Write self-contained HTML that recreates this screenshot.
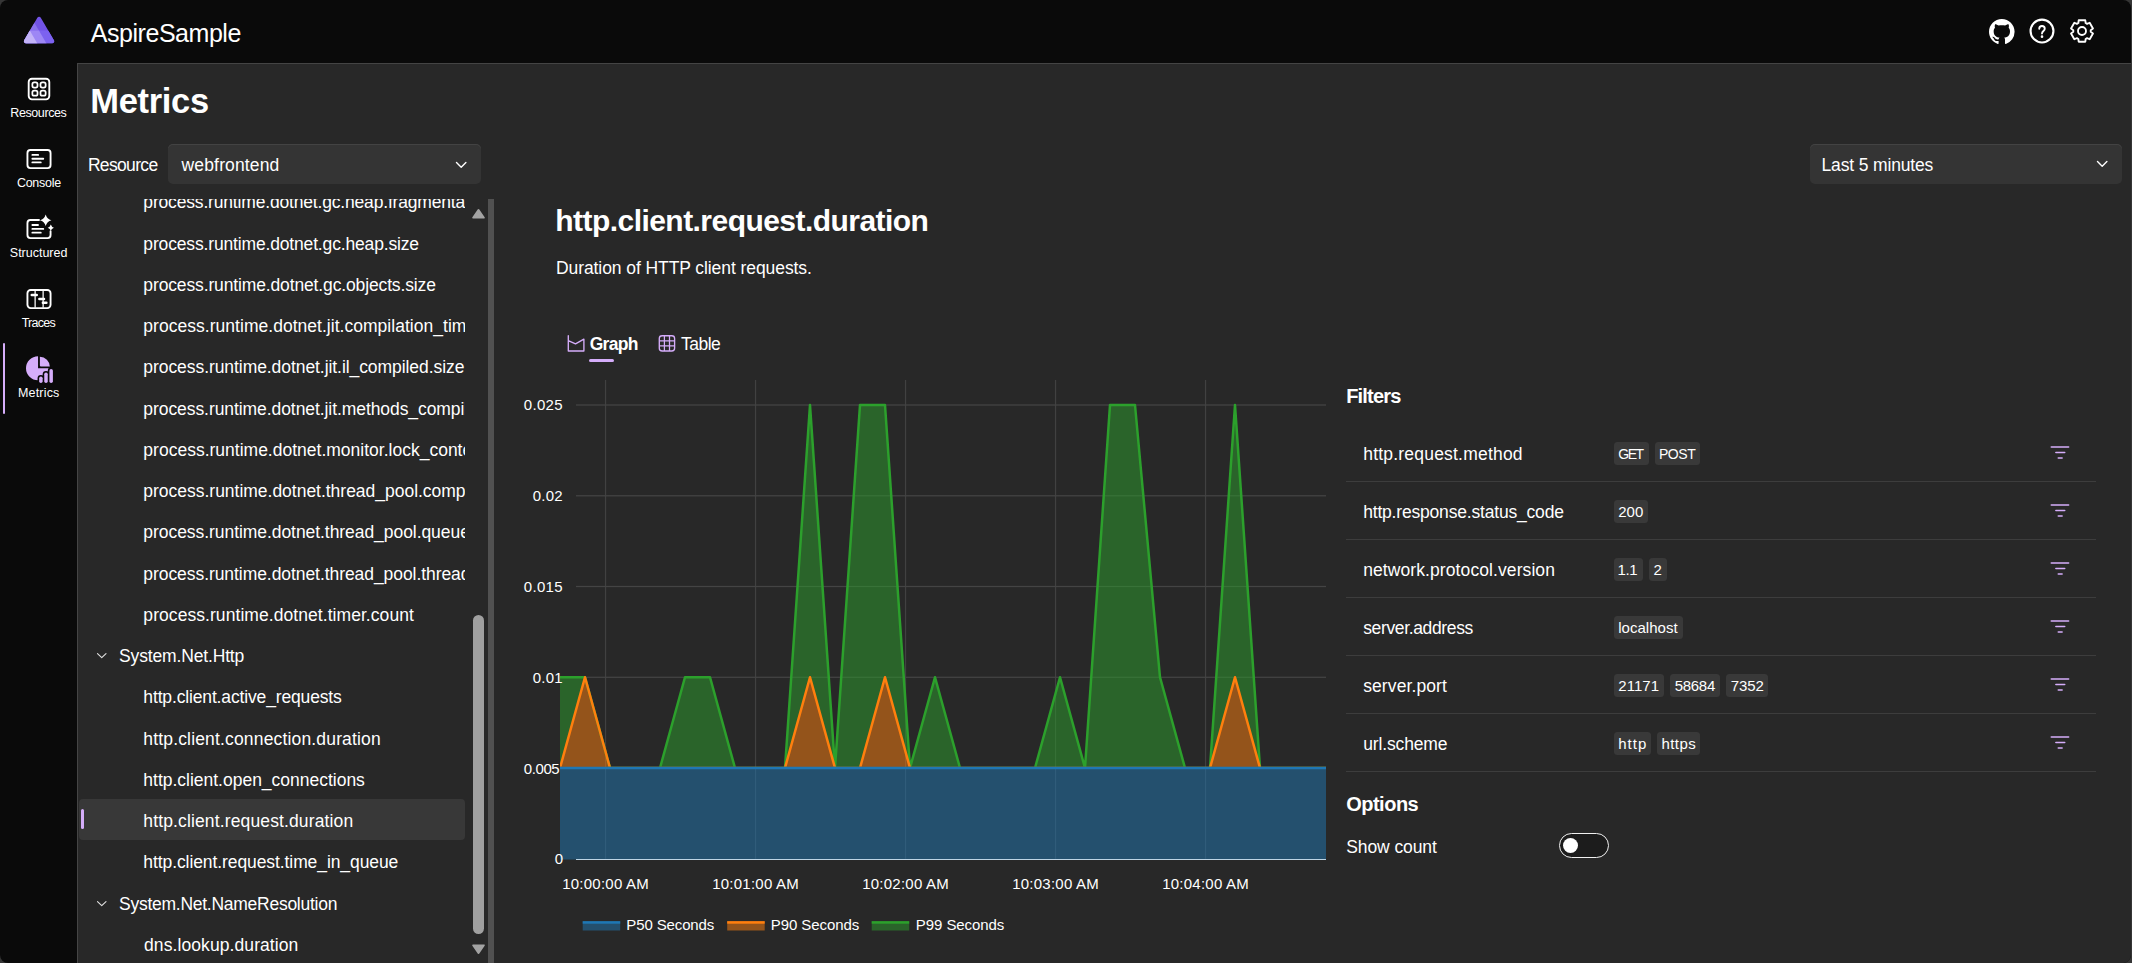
<!DOCTYPE html>
<html lang="en"><head><meta charset="utf-8"><title>AspireSample - Metrics</title>
<style>
*{box-sizing:border-box}
html,body{margin:0;padding:0}
body{width:2132px;height:963px;overflow:hidden;background:#363636;font-family:"Liberation Sans", sans-serif;color:#fff;position:relative}
#app{position:absolute;left:0;top:0;width:2131px;height:963px;background:#0a0a0a;border-radius:8px;overflow:hidden}
h1,h2,h3,h4,p,label{margin:0;font-weight:400}
.t{position:absolute;white-space:pre;display:block;color:#fff}
.i{position:absolute;display:block;overflow:visible}
header{position:absolute;left:0;top:0;width:2132px;height:63px}
nav{position:absolute;left:0;top:64px;width:77px;height:899px}
main{position:absolute;left:77px;top:63px;width:2055px;height:900px;background:#282828;border-left:1px solid #454545;border-top:1px solid #444}
.sel{position:absolute;height:40px;top:144px;background:#343434;border-radius:5px;box-shadow:inset 0 1px 0 #434343}
#tree{position:absolute;left:78.5px;top:199px;width:386.5px;height:764px;overflow:hidden}
ul,li,figure{margin:0;padding:0;list-style:none}
#tree .selrow{position:absolute;left:0;top:600px;width:386.5px;height:40.8px;background:#383838;border-radius:4px}
.chip{position:absolute;display:block;height:23.6px;background:#393939;border-radius:3.5px}
.selmark{position:absolute;width:3.3px;height:20px;border-radius:1.65px;background:#d5adfa}
.thumb{position:absolute;width:11px;height:319.2px;border-radius:5.5px;background:#a0a0a0}
.splitter{position:absolute;width:6px;height:764px;background:#515151}
.tabline{position:absolute;width:25px;height:3.1px;border-radius:1.6px;background:#d5adfa}
.switch{position:absolute;width:50.5px;height:25.2px;border:1.3px solid #f0f0f0;border-radius:13px;background:#1c1c1c}
.knob{position:absolute;left:3.3px;top:3.7px;width:15px;height:15px;border-radius:50%;background:#fff}
.sep{position:absolute;left:1346px;width:750px;height:1px;background:#3d3d3d}
</style></head>
<body>
<div id="app">
<header>
<svg class="i" style="left:22px;top:14px" width="34" height="32" viewBox="22 14 34 32"><defs><clipPath id="lg"><path d="M37.34 17.79A2.0 2.0 0 0 1 40.80 17.79L53.93 40.19A2.0 2.0 0 0 1 52.21 43.20L25.93 43.20A2.0 2.0 0 0 1 24.21 40.19Z"/></clipPath></defs><g clip-path="url(#lg)"><rect x="22" y="14" width="34" height="32" fill="#7253e6"/><polygon points="22,30.6 56,30.6 56,46 22,46" fill="#7c62f0"/><polygon points="34.5,22.9 22,22.9 22,14 30,14" fill="#8a71ee"/><polygon points="34.5,22.9 22,22.9 22,30.6 38.95,30.6" fill="#8a71ee"/><polygon points="38.95,30.6 47.9,46 22,46 22,30.6" fill="#9d87f5"/><polygon points="29.8,30.6 38.75,46 22,46 22,30.6" fill="#c3b3f8"/></g></svg>
<h1 class="t" style="left:90.85px;top:17px;font-size:25px;line-height:32px;letter-spacing:-0.467px;">AspireSample</h1>
<svg class="i" style="left:1989.4px;top:18.500px" width="25.6" height="25.6" viewBox="0 0 16 16"><path fill="#fff" d="M8 0C3.58 0 0 3.58 0 8c0 3.54 2.29 6.53 5.47 7.59.4.07.55-.17.55-.38 0-.19-.01-.82-.01-1.49-2.01.37-2.53-.49-2.69-.94-.09-.23-.48-.94-.82-1.13-.28-.15-.68-.52-.01-.53.63-.01 1.08.58 1.23.82.72 1.21 1.87.87 2.33.66.07-.52.28-.87.51-1.07-1.78-.2-3.64-.89-3.64-3.95 0-.87.31-1.59.82-2.15-.08-.2-.36-1.02.08-2.12 0 0 .67-.21 2.2.82.64-.18 1.32-.27 2-.27.68 0 1.36.09 2 .27 1.53-1.04 2.2-.82 2.2-.82.44 1.1.16 1.92.08 2.12.51.56.82 1.27.82 2.15 0 3.07-1.87 3.75-3.65 3.95.29.25.54.73.54 1.48 0 1.07-.01 1.93-.01 2.2 0 .21.15.46.55.38A8.013 8.013 0 0016 8c0-4.42-3.58-8-8-8z"/></svg>
<svg class="i" style="left:2027px;top:16.4px" width="30" height="30" viewBox="0 0 24 24" ><circle cx="12" cy="12" r="9.15" fill="none" stroke="#fff" stroke-width="1.7"/><path d="M9.8 10.200a2.200 2.200 0 0 1 4.400 0c0 1.700-2.200 1.900-2.200 3.800" fill="none" stroke="#fff" stroke-width="1.5" stroke-linecap="round"/><circle cx="12" cy="16.500" r="1.050" fill="#fff"/></svg>
<svg class="i" style="left:2067px;top:16.4px" width="30" height="30" viewBox="0 0 24 24" ><path d="M9.08 5.64 L9.34 3.40 L14.66 3.40 L14.92 5.64 L16.05 6.29 L18.12 5.40 L20.78 10.00 L18.97 11.35 L18.97 12.65 L20.78 14.00 L18.12 18.60 L16.05 17.71 L14.92 18.36 L14.66 20.60 L9.34 20.60 L9.08 18.36 L7.95 17.71 L5.88 18.60 L3.22 14.00 L5.03 12.65 L5.03 11.35 L3.22 10.00 L5.88 5.40 L7.95 6.29Z" fill="none" stroke="#fff" stroke-width="1.5" stroke-linejoin="round"/><circle cx="12" cy="12" r="3.2" fill="none" stroke="#fff" stroke-width="1.5"/></svg>
</header>
<nav>
<a class="navitem"><svg class="i" style="left:24px;top:10px" width="30" height="30" viewBox="0 0 24 24" ><rect x="3.75" y="3.75" width="16.5" height="16.5" rx="2.6" fill="none" stroke="#fff" stroke-width="1.5"/><rect x="6.7" y="6.7" width="4.1" height="4.1" rx="1.4" fill="none" stroke="#fff" stroke-width="1.4"/><rect x="6.7" y="13.2" width="4.1" height="4.1" rx="1.4" fill="none" stroke="#fff" stroke-width="1.4"/><rect x="13.2" y="6.7" width="4.1" height="4.1" rx="1.4" fill="none" stroke="#fff" stroke-width="1.4"/><rect x="13.2" y="13.2" width="4.1" height="4.1" rx="1.4" fill="none" stroke="#fff" stroke-width="1.4"/></svg><span class="t" style="left:10.35px;top:40px;font-size:12.5px;line-height:18px;letter-spacing:-0.419px;">Resources</span></a>
<a class="navitem"><svg class="i" style="left:24px;top:80px" width="30" height="30" viewBox="0 0 24 24" ><rect x="2.75" y="4.75" width="18.5" height="14.5" rx="2.4" fill="none" stroke="#fff" stroke-width="1.5"/><path d="M6.7 8.7h4.6M6.7 11.75h8.7M6.7 14.7h6.7" stroke="#fff" stroke-width="1.5" stroke-linecap="round" fill="none"/></svg><span class="t" style="left:16.90px;top:110px;font-size:12.5px;line-height:18px;letter-spacing:-0.279px;">Console</span></a>
<a class="navitem"><svg class="i" style="left:24px;top:150px" width="30" height="30" viewBox="0 0 24 24" ><path d="M12 4.75H5.15a2.4 2.4 0 0 0-2.4 2.4v9.7a2.4 2.4 0 0 0 2.4 2.4h13.7a2.4 2.4 0 0 0 2.4-2.4V13.7" fill="none" stroke="#fff" stroke-width="1.5" stroke-linecap="round"/><path d="M6.7 8.8h4.5M6.7 11.9h8.7M6.7 14.9h6.7" stroke="#fff" stroke-width="1.5" stroke-linecap="round" fill="none"/><path d="M17.35 0.35000000000000053Q18.362000000000002 3.938 21.950000000000003 4.95Q18.362000000000002 5.962 17.35 9.55Q16.338 5.962 12.750000000000002 4.95Q16.338 3.938 17.35 0.35000000000000053ZM21.45 8.45Q22.0 10.399999999999999 23.95 10.95Q22.0 11.5 21.45 13.45Q20.9 11.5 18.95 10.95Q20.9 10.399999999999999 21.45 8.45Z" fill="#fff"/></svg><span class="t" style="left:9.85px;top:180px;font-size:12.5px;line-height:18px;letter-spacing:-0.019px;">Structured</span></a>
<a class="navitem"><svg class="i" style="left:24px;top:220px" width="30" height="30" viewBox="0 0 24 24" ><rect x="2.75" y="4.75" width="18.5" height="14.5" rx="2.6" fill="none" stroke="#fff" stroke-width="1.5"/><path d="M8.9 5v14M15.3 5v14" stroke="#fff" stroke-width="1" fill="none"/><path d="M6.2 8.8h4M12.3 11.9h3.7M15.1 15h2.8" stroke="#fff" stroke-width="2" stroke-linecap="round" fill="none"/></svg><span class="t" style="left:21.65px;top:250px;font-size:12.5px;line-height:18px;letter-spacing:-0.740px;">Traces</span></a>
<a class="navitem"><svg class="i" style="left:24px;top:290px" width="30" height="30" viewBox="24 354 30 30" ><path d="M38.05 356.25A12.05 12.05 0 1 0 50.1 368.3L38.05 368.3Z" fill="#d5adfa"/><path d="M39.9 356.75A9.9 9.9 0 0 1 49.8 366.6L40.9 366.6A1 1 0 0 1 39.9 365.6Z" fill="#d5adfa"/><rect x="39.15" y="376.6" width="3.5" height="6.4" rx="1.75" fill="#d5adfa" stroke="#0a0a0a" stroke-width="3.2"/><rect x="44.25" y="372.6" width="3.5" height="10.4" rx="1.75" fill="#d5adfa" stroke="#0a0a0a" stroke-width="3.2"/><rect x="49.4" y="368.9" width="3.5" height="14.1" rx="1.75" fill="#d5adfa" stroke="#0a0a0a" stroke-width="3.2"/><rect x="39.15" y="376.6" width="3.5" height="6.4" rx="1.75" fill="#d5adfa"/><rect x="44.25" y="372.6" width="3.5" height="10.4" rx="1.75" fill="#d5adfa"/><rect x="49.4" y="368.9" width="3.5" height="14.1" rx="1.75" fill="#d5adfa"/></svg><span class="t" style="left:17.95px;top:320px;font-size:12.5px;line-height:18px;letter-spacing:0.186px;">Metrics</span></a>
<div style="position:absolute;left:3px;top:279px;width:2.3px;height:70.5px;background:#d5adfa;border-radius:1px"></div>
</nav>
<main>
<h2 class="t" style="left:12.30px;top:16px;font-size:34.5px;line-height:42px;letter-spacing:-0.335px;font-weight:700;">Metrics</h2>
<div class="toolbar">
<label class="t" style="left:9.90px;top:89px;font-size:17.5px;line-height:24px;letter-spacing:-0.665px;">Resource</label>
<div class="sel" role="combobox" style="left:90px;top:80px;width:313px"><span class="t" style="left:13.60px;top:9px;font-size:17.5px;line-height:24px;letter-spacing:0.142px;">webfrontend</span><svg class="i" style="left:286.3px;top:15.699999999999989px" width="14.4" height="10" viewBox="-2 -2 14.4 10"><path d="M0.5 0.6L5.2 5.2L9.9 0.6" fill="none" stroke="#fff" stroke-width="1.4" stroke-linecap="round" stroke-linejoin="round"/></svg></div>
<div class="sel" role="combobox" style="left:1732px;top:80px;width:311.5px"><span class="t" style="left:11.55px;top:9px;font-size:17.5px;line-height:24px;letter-spacing:-0.155px;">Last 5 minutes</span><svg class="i" style="left:285.3000000000002px;top:15.199999999999989px" width="14.4" height="10" viewBox="-2 -2 14.4 10"><path d="M0.5 0.6L5.2 5.2L9.9 0.6" fill="none" stroke="#fff" stroke-width="1.4" stroke-linecap="round" stroke-linejoin="round"/></svg></div>
</div>
<aside id="tree" style="left:0.5px;top:135px">
<ul role="tree">
<li role="treeitem"><span class="t" style="left:64.85px;top:-9px;font-size:17.5px;line-height:24px;letter-spacing:-0.176px;">process.runtime.dotnet.gc.heap.fragmentation.size</span></li>
<li role="treeitem"><span class="t" style="left:64.85px;top:33px;font-size:17.5px;line-height:24px;letter-spacing:-0.159px;">process.runtime.dotnet.gc.heap.size</span></li>
<li role="treeitem"><span class="t" style="left:64.85px;top:74px;font-size:17.5px;line-height:24px;letter-spacing:-0.137px;">process.runtime.dotnet.gc.objects.size</span></li>
<li role="treeitem"><span class="t" style="left:64.85px;top:115px;font-size:17.5px;line-height:24px;letter-spacing:0.027px;">process.runtime.dotnet.jit.compilation_time</span></li>
<li role="treeitem"><span class="t" style="left:64.85px;top:156px;font-size:17.5px;line-height:24px;letter-spacing:-0.068px;">process.runtime.dotnet.jit.il_compiled.size</span></li>
<li role="treeitem"><span class="t" style="left:64.85px;top:198px;font-size:17.5px;line-height:24px;letter-spacing:-0.073px;">process.runtime.dotnet.jit.methods_compiled.count</span></li>
<li role="treeitem"><span class="t" style="left:64.85px;top:239px;font-size:17.5px;line-height:24px;letter-spacing:0.002px;">process.runtime.dotnet.monitor.lock_contention.count</span></li>
<li role="treeitem"><span class="t" style="left:64.85px;top:280px;font-size:17.5px;line-height:24px;letter-spacing:-0.019px;">process.runtime.dotnet.thread_pool.completed_items.count</span></li>
<li role="treeitem"><span class="t" style="left:64.85px;top:321px;font-size:17.5px;line-height:24px;letter-spacing:-0.059px;">process.runtime.dotnet.thread_pool.queue.length</span></li>
<li role="treeitem"><span class="t" style="left:64.85px;top:363px;font-size:17.5px;line-height:24px;letter-spacing:-0.067px;">process.runtime.dotnet.thread_pool.threads.count</span></li>
<li role="treeitem"><span class="t" style="left:64.85px;top:404px;font-size:17.5px;line-height:24px;letter-spacing:0.062px;">process.runtime.dotnet.timer.count</span></li>
<li role="treeitem" aria-expanded="true"><svg class="i" style="left:16.200000000000003px;top:452.20000000000005px" width="13.5" height="9.4" viewBox="-2 -2 13.5 9.4"><path d="M0.5 0.6L4.75 4.6000000000000005L9.0 0.6" fill="none" stroke="#e0e0e0" stroke-width="1.15" stroke-linecap="round" stroke-linejoin="round"/></svg><span class="t" style="left:40.55px;top:445px;font-size:17.5px;line-height:24px;letter-spacing:-0.154px;">System.Net.Http</span></li>
<li role="treeitem"><span class="t" style="left:64.85px;top:486px;font-size:17.5px;line-height:24px;letter-spacing:-0.148px;">http.client.active_requests</span></li>
<li role="treeitem"><span class="t" style="left:64.85px;top:528px;font-size:17.5px;line-height:24px;letter-spacing:0.162px;">http.client.connection.duration</span></li>
<li role="treeitem"><span class="t" style="left:64.85px;top:569px;font-size:17.5px;line-height:24px;letter-spacing:-0.012px;">http.client.open_connections</span></li>
<li role="treeitem" aria-selected="true"><div class="selrow" style="top:600px"></div><div class="selmark" style="left:2.4000000000000057px;top:610.2px"></div><span class="t" style="left:64.85px;top:610px;font-size:17.5px;line-height:24px;letter-spacing:0.133px;">http.client.request.duration</span></li>
<li role="treeitem"><span class="t" style="left:64.85px;top:651px;font-size:17.5px;line-height:24px;letter-spacing:-0.089px;">http.client.request.time_in_queue</span></li>
<li role="treeitem" aria-expanded="true"><svg class="i" style="left:16.200000000000003px;top:699.7px" width="13.5" height="9.4" viewBox="-2 -2 13.5 9.4"><path d="M0.5 0.6L4.75 4.6000000000000005L9.0 0.6" fill="none" stroke="#e0e0e0" stroke-width="1.15" stroke-linecap="round" stroke-linejoin="round"/></svg><span class="t" style="left:40.55px;top:693px;font-size:17.5px;line-height:24px;letter-spacing:-0.265px;">System.Net.NameResolution</span></li>
<li role="treeitem"><span class="t" style="left:65.55px;top:734px;font-size:17.5px;line-height:24px;letter-spacing:0.086px;">dns.lookup.duration</span></li>
</ul>
</aside>
<div class="scrollbar"><div class="thumb" style="left:395px;top:550.8px"></div><svg class="i" style="left:394px;top:145px" width="13" height="10" viewBox="0 0 13 10"><path d="M6.500 0.800L12 8.800H1Z" fill="#a3a3a3" stroke="#a3a3a3" stroke-width="1.6" stroke-linejoin="round"/></svg><svg class="i" style="left:394px;top:880.2px" width="13" height="10" viewBox="0 0 13 10"><path d="M6.500 9.200L12 1.200H1Z" fill="#a3a3a3" stroke="#a3a3a3" stroke-width="1.6" stroke-linejoin="round"/></svg></div>
<div class="splitter" style="left:410px;top:135px"></div>
<section class="metric">
<h3 class="t" style="left:477.25px;top:138px;font-size:30px;line-height:37px;letter-spacing:-0.545px;font-weight:700;">http.client.request.duration</h3>
<p class="t" style="left:477.95px;top:192px;font-size:17.5px;line-height:24px;letter-spacing:-0.077px;">Duration of HTTP client requests.</p>
<div role="tablist">
<div role="tab" aria-selected="true"><svg class="i" style="left:488px;top:270px" width="20" height="20" viewBox="566 334 20 20"><path d="M568.3 335.700V351H583.900V339.200L575.500 343.800L568.300 340.600" fill="none" stroke="#d5adfa" stroke-width="1.35" stroke-linejoin="round" stroke-linecap="round"/></svg><span class="t" style="left:511.65px;top:268px;font-size:17.5px;line-height:24px;letter-spacing:-0.712px;font-weight:700;">Graph</span><div class="tabline" style="left:511px;top:295px"></div></div>
<div role="tab"><svg class="i" style="left:579px;top:269px" width="20" height="20" viewBox="657 333 20 20"><rect x="659.300" y="335.700" width="15.300" height="15.300" rx="2.8" fill="none" stroke="#d5adfa" stroke-width="1.35"/><path d="M664.400 335.700v15.300M669.500 335.700v15.300M659.300 340.800h15.300M659.300 345.900h15.300" stroke="#d5adfa" stroke-width="1.25" fill="none"/></svg><span class="t" style="left:603.05px;top:268px;font-size:17.5px;line-height:24px;letter-spacing:-0.536px;">Table</span></div>
</div>
<figure class="chart">
<svg class="i" id="chart" style="left:422px;top:316px" width="860" height="570" viewBox="500 380 860 570"><rect x="604.90" y="380" width="1.25" height="478.75" fill="#414141"/><rect x="754.90" y="380" width="1.25" height="478.75" fill="#414141"/><rect x="904.90" y="380" width="1.25" height="478.75" fill="#414141"/><rect x="1054.90" y="380" width="1.25" height="478.75" fill="#414141"/><rect x="1204.90" y="380" width="1.25" height="478.75" fill="#414141"/><rect x="576" y="404.38" width="750" height="1.25" fill="#444"/><rect x="576" y="495.18" width="750" height="1.25" fill="#444"/><rect x="576" y="585.88" width="750" height="1.25" fill="#444"/><rect x="576" y="676.68" width="750" height="1.25" fill="#444"/><rect x="576" y="767.38" width="750" height="1.25" fill="#444"/><clipPath id="cp"><rect x="560" y="380" width="766" height="480"/></clipPath><g clip-path="url(#cp)"><polygon points="560.0,677.25 585.0,677.25 610.0,768.00 635.0,768.00 660.0,768.00 685.0,677.25 710.0,677.25 735.0,768.00 760.0,768.00 785.0,768.00 810.0,405.00 835.0,768.00 860.0,405.00 885.0,405.00 910.0,768.00 935.0,677.25 960.0,768.00 985.0,768.00 1010.0,768.00 1035.0,768.00 1060.0,677.25 1085.0,768.00 1110.0,405.00 1135.0,405.00 1160.0,677.25 1185.0,768.00 1210.0,768.00 1235.0,405.00 1260.0,768.00 1285.0,768.00 1310.0,768.00 1326.0,768.00 1326.0,768.00 1310.0,768.00 1285.0,768.00 1260.0,768.00 1235.0,677.25 1210.0,768.00 1185.0,768.00 1160.0,768.00 1135.0,768.00 1110.0,768.00 1085.0,768.00 1060.0,768.00 1035.0,768.00 1010.0,768.00 985.0,768.00 960.0,768.00 935.0,768.00 910.0,768.00 885.0,677.25 860.0,768.00 835.0,768.00 810.0,677.25 785.0,768.00 760.0,768.00 735.0,768.00 710.0,768.00 685.0,768.00 660.0,768.00 635.0,768.00 610.0,768.00 585.0,677.25 560.0,768.00" fill="#2ca02c" fill-opacity="0.5"/><polygon points="560.0,768.00 585.0,677.25 610.0,768.00 785.0,768.00 810.0,677.25 835.0,768.00 860.0,768.00 885.0,677.25 910.0,768.00 1210.0,768.00 1235.0,677.25 1260.0,768.00 1326.0,768.00 1326.0,768.00 560.0,768.00" fill="#ff7f0e" fill-opacity="0.5"/><rect x="560" y="768.00" width="766" height="91.55" fill="#1f77b4" fill-opacity="0.5"/><clipPath id="cl"><rect x="560" y="380" width="766" height="386.75"/></clipPath><g clip-path="url(#cl)"><polyline points="560.0,677.25 585.0,677.25 610.0,768.00 635.0,768.00 660.0,768.00 685.0,677.25 710.0,677.25 735.0,768.00 760.0,768.00 785.0,768.00 810.0,405.00 835.0,768.00 860.0,405.00 885.0,405.00 910.0,768.00 935.0,677.25 960.0,768.00 985.0,768.00 1010.0,768.00 1035.0,768.00 1060.0,677.25 1085.0,768.00 1110.0,405.00 1135.0,405.00 1160.0,677.25 1185.0,768.00 1210.0,768.00 1235.0,405.00 1260.0,768.00 1285.0,768.00 1310.0,768.00 1326.0,768.00" fill="none" stroke="#2ca02c" stroke-width="2.5" stroke-linejoin="round"/><polyline points="560.0,768.00 585.0,677.25 610.0,768.00 785.0,768.00 810.0,677.25 835.0,768.00 860.0,768.00 885.0,677.25 910.0,768.00 1210.0,768.00 1235.0,677.25 1260.0,768.00 1326.0,768.00" fill="none" stroke="#ff7f0e" stroke-width="2.5" stroke-linejoin="round"/></g><line x1="560" y1="768.00" x2="1326" y2="768.00" stroke="#1f77b4" stroke-width="2.5"/></g><rect x="576" y="859" width="750" height="1" fill="#bdd4e4"/><rect x="582.7" y="921.2" width="37.5" height="9.3" fill="#1f77b4" fill-opacity="0.5"/><rect x="582.7" y="921.2" width="37.5" height="2.5" fill="#1f77b4"/><rect x="727.2" y="921.2" width="37.5" height="9.3" fill="#ff7f0e" fill-opacity="0.5"/><rect x="727.2" y="921.2" width="37.5" height="2.5" fill="#ff7f0e"/><rect x="871.7" y="921.2" width="37.5" height="9.3" fill="#2ca02c" fill-opacity="0.5"/><rect x="871.7" y="921.2" width="37.5" height="2.5" fill="#2ca02c"/></svg>
<div class="yaxis"><span class="t ax" style="left:445.80px;top:330px;font-size:15px;line-height:21px;letter-spacing:0.288px;">0.025</span><span class="t ax" style="left:454.85px;top:421px;font-size:15px;line-height:21px;letter-spacing:0.149px;">0.02</span><span class="t ax" style="left:445.80px;top:512px;font-size:15px;line-height:21px;letter-spacing:0.288px;">0.015</span><span class="t ax" style="left:454.85px;top:603px;font-size:15px;line-height:21px;letter-spacing:0.149px;">0.01</span><span class="t ax" style="left:445.80px;top:694px;font-size:15px;line-height:21px;letter-spacing:-0.412px;">0.005</span><span class="t ax" style="left:476.65px;top:784px;font-size:15px;line-height:21px;letter-spacing:-3.294px;">0</span></div>
<div class="xaxis"><span class="t ax" style="left:484.15px;top:809px;font-size:15px;line-height:21px;letter-spacing:0.242px;">10:00:00 AM</span><span class="t ax" style="left:634.15px;top:809px;font-size:15px;line-height:21px;letter-spacing:0.242px;">10:01:00 AM</span><span class="t ax" style="left:784.15px;top:809px;font-size:15px;line-height:21px;letter-spacing:0.242px;">10:02:00 AM</span><span class="t ax" style="left:934.15px;top:809px;font-size:15px;line-height:21px;letter-spacing:0.242px;">10:03:00 AM</span><span class="t ax" style="left:1084.15px;top:809px;font-size:15px;line-height:21px;letter-spacing:0.242px;">10:04:00 AM</span></div>
<div class="legend"><span class="t ax" style="left:548.35px;top:850px;font-size:15px;line-height:21px;letter-spacing:-0.128px;">P50 Seconds</span><span class="t ax" style="left:692.75px;top:850px;font-size:15px;line-height:21px;letter-spacing:-0.063px;">P90 Seconds</span><span class="t ax" style="left:837.80px;top:850px;font-size:15px;line-height:21px;letter-spacing:-0.068px;">P99 Seconds</span></div>
</figure>
<section class="filters">
<h4 class="t" style="left:1268.20px;top:319px;font-size:20px;line-height:26px;letter-spacing:-0.805px;font-weight:700;">Filters</h4>
<div class="frow"><span class="t" style="left:1285.20px;top:378px;font-size:17.5px;line-height:24px;letter-spacing:0.208px;">http.request.method</span><span class="chip" style="left:1535.7px;top:377.5px;width:35.3px"><span class="t" style="left:4.55px;top:2.5px;font-size:14px;line-height:20px;letter-spacing:-1.466px;">GET</span></span><span class="chip" style="left:1577.0px;top:377.5px;width:45.2px"><span class="t" style="left:3.95px;top:2.5px;font-size:14px;line-height:20px;letter-spacing:-0.458px;">POST</span></span><svg class="i" style="left:1971px;top:380.2px" width="22" height="18" viewBox="2049 444.2 22 18"><path d="M2051.300 447.2h17.300M2055.900 452.7h8.800M2058.300 458.2h3.800" stroke="#d5adfa" stroke-width="1.6" stroke-linecap="round" fill="none"/></svg><div class="sep" style="left:1268px;top:417px"></div></div>
<div class="frow"><span class="t" style="left:1285.20px;top:436px;font-size:17.5px;line-height:24px;letter-spacing:-0.189px;">http.response.status_code</span><span class="chip" style="left:1535.7px;top:435.5px;width:34.6px"><span class="t" style="left:4.55px;top:1.5000000000000568px;font-size:15px;line-height:21px;letter-spacing:0.034px;">200</span></span><svg class="i" style="left:1971px;top:438.2px" width="22" height="18" viewBox="2049 502.2 22 18"><path d="M2051.300 505.2h17.300M2055.900 510.7h8.800M2058.300 516.2h3.800" stroke="#d5adfa" stroke-width="1.6" stroke-linecap="round" fill="none"/></svg><div class="sep" style="left:1268px;top:475px"></div></div>
<div class="frow"><span class="t" style="left:1285.20px;top:494px;font-size:17.5px;line-height:24px;letter-spacing:0.090px;">network.protocol.version</span><span class="chip" style="left:1535.7px;top:493.5px;width:29.3px"><span class="t" style="left:3.85px;top:1.5px;font-size:15px;line-height:21px;letter-spacing:-0.355px;">1.1</span></span><span class="chip" style="left:1571.0px;top:493.5px;width:18.0px"><span class="t" style="left:4.60px;top:1.5px;font-size:15px;line-height:21px;letter-spacing:-1.894px;">2</span></span><svg class="i" style="left:1971px;top:496.2px" width="22" height="18" viewBox="2049 560.2 22 18"><path d="M2051.300 563.2h17.300M2055.900 568.7h8.800M2058.300 574.2h3.800" stroke="#d5adfa" stroke-width="1.6" stroke-linecap="round" fill="none"/></svg><div class="sep" style="left:1268px;top:533px"></div></div>
<div class="frow"><span class="t" style="left:1285.20px;top:552px;font-size:17.5px;line-height:24px;letter-spacing:-0.360px;">server.address</span><span class="chip" style="left:1535.7px;top:551.5px;width:69.2px"><span class="t" style="left:4.55px;top:1.5px;font-size:15px;line-height:21px;letter-spacing:0.025px;">localhost</span></span><svg class="i" style="left:1971px;top:554.2px" width="22" height="18" viewBox="2049 618.2 22 18"><path d="M2051.300 621.2h17.300M2055.900 626.7h8.800M2058.300 632.2h3.800" stroke="#d5adfa" stroke-width="1.6" stroke-linecap="round" fill="none"/></svg><div class="sep" style="left:1268px;top:591px"></div></div>
<div class="frow"><span class="t" style="left:1285.20px;top:610px;font-size:17.5px;line-height:24px;letter-spacing:0.096px;">server.port</span><span class="chip" style="left:1535.7px;top:609.5px;width:50.3px"><span class="t" style="left:4.55px;top:1.5px;font-size:15px;line-height:21px;letter-spacing:0.073px;">21171</span></span><span class="chip" style="left:1592.0px;top:609.5px;width:50.0px"><span class="t" style="left:4.65px;top:1.5px;font-size:15px;line-height:21px;letter-spacing:-0.267px;">58684</span></span><span class="chip" style="left:1647.8px;top:609.5px;width:42.5px"><span class="t" style="left:4.90px;top:1.5px;font-size:15px;line-height:21px;letter-spacing:-0.108px;">7352</span></span><svg class="i" style="left:1971px;top:612.2px" width="22" height="18" viewBox="2049 676.2 22 18"><path d="M2051.300 679.2h17.300M2055.900 684.7h8.800M2058.300 690.2h3.800" stroke="#d5adfa" stroke-width="1.6" stroke-linecap="round" fill="none"/></svg><div class="sep" style="left:1268px;top:649px"></div></div>
<div class="frow"><span class="t" style="left:1285.20px;top:668px;font-size:17.5px;line-height:24px;letter-spacing:-0.138px;">url.scheme</span><span class="chip" style="left:1535.7px;top:667.5px;width:37.3px"><span class="t" style="left:4.55px;top:1.5px;font-size:15px;line-height:21px;letter-spacing:1.023px;">http</span></span><span class="chip" style="left:1579.0px;top:667.5px;width:43.2px"><span class="t" style="left:4.45px;top:1.5px;font-size:15px;line-height:21px;letter-spacing:0.430px;">https</span></span><svg class="i" style="left:1971px;top:670.2px" width="22" height="18" viewBox="2049 734.2 22 18"><path d="M2051.300 737.2h17.300M2055.900 742.7h8.800M2058.300 748.2h3.800" stroke="#d5adfa" stroke-width="1.6" stroke-linecap="round" fill="none"/></svg><div class="sep" style="left:1268px;top:707px"></div></div>
</section>
<section class="options">
<h4 class="t" style="left:1268.20px;top:727px;font-size:20px;line-height:26px;letter-spacing:-0.499px;font-weight:700;">Options</h4>
<label class="t" style="left:1268.20px;top:771px;font-size:17.5px;line-height:24px;letter-spacing:-0.089px;">Show count</label><div class="switch" role="switch" aria-checked="false" style="left:1480.7px;top:769px"><div class="knob"></div></div>
</section>
</section>
</main>
</div>
</body></html>
